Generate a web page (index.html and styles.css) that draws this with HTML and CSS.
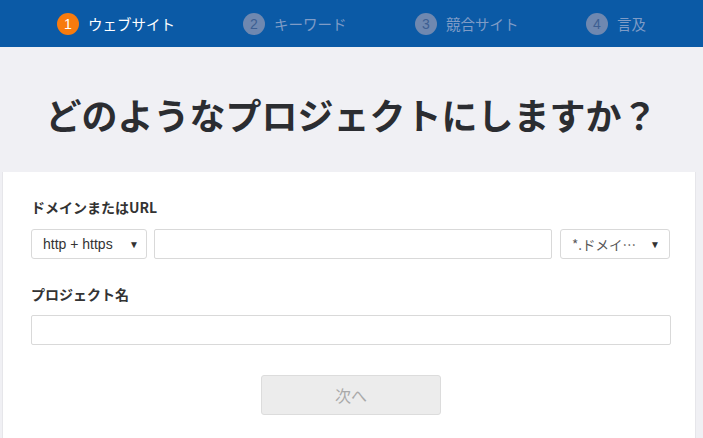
FILE: index.html
```html
<!DOCTYPE html>
<html lang="ja">
<head>
<meta charset="utf-8">
<link rel="stylesheet" href="styles.css">
</head>
<body>
<div class="steps">
  <div class="step active"><span class="num">1</span><span class="label">ウェブサイト</span></div>
  <div class="step"><span class="num">2</span><span class="label">キーワード</span></div>
  <div class="step"><span class="num">3</span><span class="label">競合サイト</span></div>
  <div class="step"><span class="num">4</span><span class="label">言及</span></div>
</div>
<div class="hero">
  <h1>どのようなプロジェクトにしますか？</h1>
</div>
<div class="panel">
  <div class="field-label">ドメインまたはURL</div>
  <div class="row">
    <div class="select sel-proto"><span>http + https</span><span class="caret">▼</span></div>
    <div class="input grow"></div>
    <div class="select sel-scope"><span class="muted">*.ドメイ…</span><span class="caret">▼</span></div>
  </div>
  <div class="field-label second">プロジェクト名</div>
  <div class="input full"></div>
  <div class="actions">
    <div class="btn">次へ</div>
  </div>
</div>
</body>
</html>
```
FILE: styles.css
```css
* { box-sizing: border-box; }
html, body { margin: 0; padding: 0; }
body {
  width: 703px;
  height: 438px;
  overflow: hidden;
  background: #f0f0f4;
  font-family: "Noto Sans CJK JP", "Liberation Sans", sans-serif;
  color: #333;
}
.steps {
  height: 47px;
  background: #0b5aa6;
  display: flex;
  align-items: center;
  padding-left: 57px;
}
.step {
  display: flex;
  align-items: center;
  color: #7f9cc6;
  font-size: 14.5px;
}
.step:nth-child(1) { width: 186px; }
.step:nth-child(2) { width: 172px; }
.step:nth-child(3) { width: 171px; }
.num {
  width: 22px;
  height: 22px;
  border-radius: 50%;
  background: #6f88b0;
  color: #3d5f92;
  font-family: "Liberation Sans", sans-serif;
  font-size: 14px;
  display: flex;
  align-items: center;
  justify-content: center;
  margin-right: 9px;
}
.step.active { color: #fff; }
.step.active .num { background: #f77b0e; color: #fff; }
.hero {
  height: 125px;
  display: flex;
  align-items: center;
  justify-content: center;
}
.hero h1 {
  margin: 0;
  font-size: 36px;
  font-weight: 700;
  color: #2b2d31;
  letter-spacing: 0;
  padding-top: 8px;
}
.panel {
  margin: 0 7px 0 2px;
  background: #fff;
  border-left: 1px solid #e6e6ea;
  border-right: 1px solid #e6e6ea;
  padding: 25px 25px 0 28px;
  height: 266px;
}
.field-label {
  font-size: 14px;
  font-weight: 700;
  color: #333;
  line-height: 20px;
  margin-bottom: 12px;
}
.field-label.second { margin-top: 25px; margin-bottom: 11px; }
.row { display: flex; gap: 7px; }
.select {
  height: 30px;
  border: 1px solid #d9d9d9;
  border-radius: 3px;
  display: flex;
  align-items: center;
  justify-content: space-between;
  padding: 0 7px 0 11px;
  font-family: "Liberation Sans", "Noto Sans CJK JP", sans-serif;
  font-size: 14px;
  color: #333;
}
.sel-proto { width: 116px; }
.sel-scope { width: 110px; margin-left: 1px; padding-right: 9px; }
.muted { color: #555; font-family: "Noto Sans CJK JP", sans-serif; font-size: 13.5px; }
.caret { font-size: 10px; color: #333; }
.input {
  height: 30px;
  border: 1px solid #d9d9d9;
  border-radius: 2px;
}
.grow { flex: 1; }
.full { width: 640px; }
.actions {
  display: flex;
  justify-content: center;
  margin-top: 30px;
  width: 640px;
}
.btn {
  width: 180px;
  height: 40px;
  background: #ececec;
  border: 1px solid #dcdcdc;
  border-radius: 3px;
  color: #a9a9a9;
  font-size: 16px;
  display: flex;
  align-items: center;
  justify-content: center;
}
```
